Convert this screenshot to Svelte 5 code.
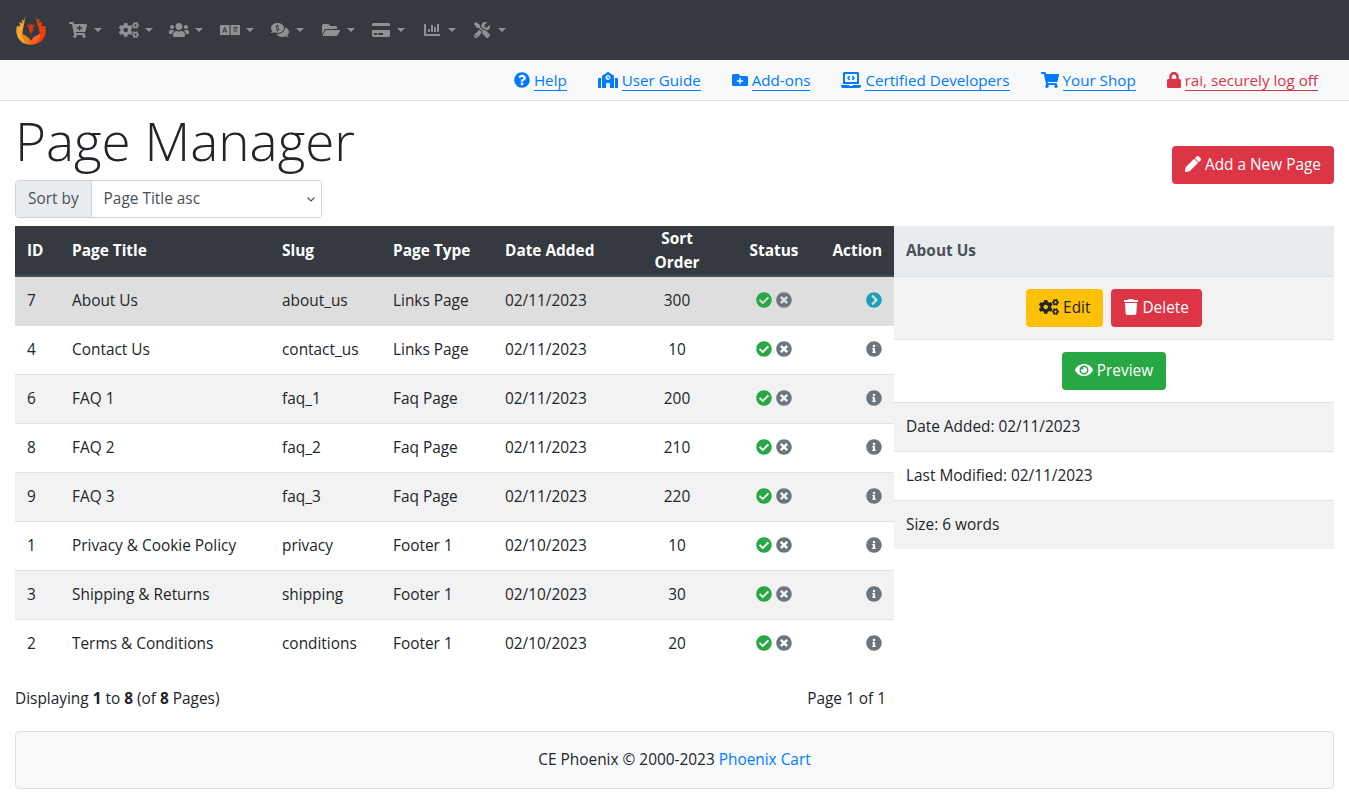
<script>
  const icons = {
    cartPlus: [576, 'M504.717 320H211.572l6.545 32h268.418c15.401 0 26.816 14.301 23.403 29.319l-5.517 24.276C523.112 414.668 536 433.828 536 456c0 31.202-25.519 56.444-56.824 55.994-29.823-.429-54.35-24.631-55.155-54.447-.44-16.287 6.085-31.049 16.803-41.548H231.176C241.553 426.165 248 440.326 248 456c0 31.813-26.528 57.431-58.67 55.938-28.54-1.325-51.751-24.385-53.251-52.917-1.158-22.034 10.436-41.455 28.051-51.586L93.883 64H24C10.745 64 0 53.255 0 40V24C0 10.745 10.745 0 24 0h102.529c11.401 0 21.228 8.021 23.513 19.19L159.208 64H551.99c15.401 0 26.816 14.301 23.403 29.319l-47.273 208C525.637 312.246 515.923 320 504.717 320zM408 168h-48v-40c0-8.837-7.163-16-16-16h-16c-8.837 0-16 7.163-16 16v40h-48c-8.837 0-16 7.163-16 16v16c0 8.837 7.163 16 16 16h48v40c0 8.837 7.163 16 16 16h16c8.837 0 16-7.163 16-16v-40h48c8.837 0 16-7.163 16-16v-16c0-8.837-7.163-16-16-16z'],
    cogs: [640, 'M512.1 191l-8.2 14.3c-3 5.3-9.4 7.5-15.1 5.4-11.8-4.4-22.6-10.7-32.1-18.6-4.6-3.8-5.8-10.5-2.8-15.7l8.2-14.3c-6.9-8-12.3-17.3-15.9-27.4h-16.5c-6 0-11.2-4.3-12.2-10.3-2-12-2.1-24.6 0-37.1 1-6 6.2-10.4 12.2-10.4h16.5c3.6-10.1 9-19.4 15.9-27.4l-8.2-14.3c-3-5.2-1.9-11.9 2.8-15.7 9.5-7.9 20.4-14.2 32.1-18.6 5.7-2.1 12.1.1 15.1 5.4l8.2 14.3c10.5-1.9 21.2-1.9 31.7 0L552 6.3c3-5.3 9.4-7.5 15.1-5.4 11.8 4.4 22.6 10.7 32.1 18.6 4.6 3.8 5.8 10.5 2.8 15.7l-8.2 14.3c6.9 8 12.3 17.3 15.9 27.4h16.5c6 0 11.2 4.3 12.2 10.3 2 12 2.1 24.6 0 37.1-1 6-6.2 10.4-12.2 10.4h-16.5c-3.6 10.1-9 19.4-15.9 27.4l8.2 14.3c3 5.2 1.9 11.9-2.8 15.7-9.5 7.9-20.4 14.2-32.1 18.6-5.7 2.1-12.1-.1-15.1-5.4l-8.2-14.3c-10.4 1.9-21.2 1.9-31.7 0zm-10.5-58.8c38.5 29.6 82.4-14.3 52.8-52.8-38.5-29.7-82.4 14.3-52.8 52.8zM386.3 286.1l33.7 16.8c10.1 5.8 14.5 18.1 10.5 29.1-8.9 24.2-26.4 46.4-42.6 65.8-7.4 8.9-20.2 11.1-30.3 5.3l-29.1-16.8c-16 13.7-34.6 24.6-54.9 31.7v33.6c0 11.6-8.3 21.6-19.7 23.6-24.6 4.2-50.4 4.4-75.9 0-11.5-2-20-11.9-20-23.6V418c-20.3-7.2-38.9-18-54.9-31.7L74 403c-10 5.8-22.9 3.6-30.3-5.3-16.2-19.4-33.3-41.6-42.2-65.7-4-10.9.4-23.2 10.5-29.1l33.3-16.8c-3.9-20.9-3.9-42.4 0-63.4L12 205.8c-10.1-5.8-14.6-18.1-10.5-29 8.9-24.2 26-46.4 42.2-65.8 7.4-8.9 20.2-11.1 30.3-5.3l29.1 16.8c16-13.7 34.6-24.6 54.9-31.7V57.1c0-11.5 8.2-21.5 19.6-23.5 24.6-4.2 50.5-4.4 76-.1 11.5 2 20 11.9 20 23.6v33.6c20.3 7.2 38.9 18 54.9 31.7l29.1-16.8c10-5.8 22.9-3.6 30.3 5.3 16.2 19.4 33.2 41.6 42.1 65.8 4 10.9.1 23.2-10 29.1l-33.7 16.8c3.9 21 3.9 42.5 0 63.5zm-117.6 21.1c59.2-77-28.7-164.9-105.7-105.7-59.2 77 28.7 164.9 105.7 105.7zm243.4 182.7l-8.2 14.3c-3 5.3-9.4 7.5-15.1 5.4-11.8-4.4-22.6-10.7-32.1-18.6-4.6-3.8-5.8-10.5-2.8-15.7l8.2-14.3c-6.9-8-12.3-17.3-15.9-27.4h-16.5c-6 0-11.2-4.3-12.2-10.3-2-12-2.1-24.6 0-37.1 1-6 6.2-10.4 12.2-10.4h16.5c3.6-10.1 9-19.4 15.9-27.4l-8.2-14.3c-3-5.2-1.9-11.9 2.8-15.7 9.5-7.9 20.4-14.2 32.1-18.6 5.7-2.1 12.1.1 15.1 5.4l8.2 14.3c10.5-1.9 21.2-1.9 31.7 0l8.2-14.3c3-5.3 9.4-7.5 15.1-5.4 11.8 4.4 22.6 10.7 32.1 18.6 4.6 3.8 5.8 10.5 2.8 15.7l-8.2 14.3c6.9 8 12.3 17.3 15.9 27.4h16.5c6 0 11.2 4.3 12.2 10.3 2 12 2.1 24.6 0 37.1-1 6-6.2 10.4-12.2 10.4h-16.5c-3.6 10.1-9 19.4-15.9 27.4l8.2 14.3c3 5.2 1.9 11.9-2.8 15.7-9.5 7.9-20.4 14.2-32.1 18.6-5.7 2.1-12.1-.1-15.1-5.4l-8.2-14.3c-10.4 1.9-21.2 1.9-31.7 0zM501.6 431c38.5 29.6 82.4-14.3 52.8-52.8-38.5-29.6-82.4 14.3-52.8 52.8z'],
    users: [640, 'M96 224c35.3 0 64-28.7 64-64s-28.7-64-64-64-64 28.7-64 64 28.7 64 64 64zm448 0c35.3 0 64-28.7 64-64s-28.7-64-64-64-64 28.7-64 64 28.7 64 64 64zm32 32h-64c-17.6 0-33.5 7.1-45.1 18.6 40.3 22.1 68.9 62 75.1 109.4h66c17.7 0 32-14.3 32-32v-32c0-35.3-28.7-64-64-64zm-256 0c61.9 0 112-50.1 112-112S381.9 32 320 32 208 82.1 208 144s50.1 112 112 112zm76.8 32h-8.3c-20.8 10-43.9 16-68.5 16s-47.6-6-68.5-16h-8.3C179.6 288 128 339.6 128 403.2V432c0 26.5 21.5 48 48 48h288c26.5 0 48-21.5 48-48v-28.8c0-63.6-51.6-115.2-115.2-115.2zm-223.7-13.4C161.5 263.1 145.6 256 128 256H64c-35.3 0-64 28.7-64 64v32c0 17.7 14.3 32 32 32h65.9c6.3-47.4 34.9-87.3 75.2-109.4z'],
    comments: [576, 'M416 192c0-88.37-93.12-160-208-160S0 103.63 0 192c0 34.27 14.13 65.95 37.97 91.98C24.61 314.22 2.52 338.16 2.2 338.48A7.995 7.995 0 0 0 8 352c36.58 0 66.93-12.25 88.73-24.98C128.93 342.76 167.02 352 208 352c114.88 0 208-71.63 208-160zm-224 96v-16.29c-11.29-.58-22.27-4.52-31.37-11.35-3.9-2.93-4.1-8.77-.57-12.14l11.75-11.21c2.77-2.64 6.89-2.76 10.13-.73 3.87 2.42 8.26 3.72 12.82 3.72h28.11c6.5 0 11.8-5.92 11.8-13.19 0-5.95-3.61-11.19-8.77-12.73l-45-13.5c-18.59-5.58-31.58-23.42-31.58-43.39 0-24.52 19.05-44.44 42.67-45.07V96c0-4.42 3.58-8 8-8h16c4.42 0 8 3.58 8 8v16.29c11.29.58 22.27 4.51 31.37 11.35 3.9 2.93 4.1 8.77.57 12.14l-11.75 11.21c-2.77 2.64-6.89 2.76-10.13.73-3.87-2.43-8.26-3.72-12.82-3.72h-28.11c-6.5 0-11.8 5.92-11.8 13.19 0 5.95 3.61 11.19 8.77 12.73l45 13.5c18.59 5.58 31.58 23.42 31.58 43.39 0 24.53-19.05 44.44-42.67 45.07V288c0 4.42-3.58 8-8 8h-16c-4.42 0-8-3.58-8-8zm346.01 123.99C561.87 385.96 576 354.27 576 320c0-66.94-53.49-124.2-129.33-148.07.86 6.6 1.33 13.29 1.33 20.07 0 105.87-107.66 192-240 192-10.78 0-21.32-.77-31.73-1.88C207.8 443.82 272.35 480 348 480c40.98 0 79.07-9.24 111.27-24.98 21.8 12.73 52.15 24.98 88.73 24.98 3.19 0 6.07-1.9 7.34-4.83 1.27-2.93.66-6.34-1.54-8.64-.32-.32-22.41-24.26-35.79-54.54z'],
    folderOpen: [576, 'M572.694 292.093L500.27 416.248A63.997 63.997 0 0 1 444.989 448H45.025c-18.523 0-30.064-20.093-20.731-36.093l72.424-124.155A64 64 0 0 1 152 256h399.964c18.523 0 30.064 20.093 20.73 36.093zM152 224h328v-48c0-26.51-21.49-48-48-48H272l-64-64H48C21.49 64 0 85.49 0 112v278.046l69.077-118.418C86.214 242.25 117.989 224 152 224z'],
    card: [576, 'M0 432c0 26.5 21.5 48 48 48h480c26.5 0 48-21.5 48-48V256H0v176zm192-68c0-6.6 5.4-12 12-12h136c6.6 0 12 5.4 12 12v40c0 6.6-5.4 12-12 12H204c-6.6 0-12-5.4-12-12v-40zm-128 0c0-6.6 5.4-12 12-12h72c6.6 0 12 5.4 12 12v40c0 6.6-5.4 12-12 12H76c-6.6 0-12-5.4-12-12v-40zM576 80v48H0V80c0-26.5 21.5-48 48-48h480c26.5 0 48 21.5 48 48z'],
    chart: [512, 'M332.8 320h38.4c6.4 0 12.8-6.4 12.8-12.8V172.8c0-6.4-6.4-12.8-12.8-12.8h-38.4c-6.4 0-12.8 6.4-12.8 12.8v134.4c0 6.4 6.4 12.8 12.8 12.8zm96 0h38.4c6.4 0 12.8-6.4 12.8-12.8V76.8c0-6.4-6.4-12.8-12.8-12.8h-38.4c-6.4 0-12.8 6.4-12.8 12.8v230.4c0 6.4 6.4 12.8 12.8 12.8zm-288 0h38.4c6.4 0 12.8-6.4 12.8-12.8v-70.4c0-6.4-6.4-12.8-12.8-12.8h-38.4c-6.4 0-12.8 6.4-12.8 12.8v70.4c0 6.4 6.4 12.8 12.8 12.8zm96 0h38.4c6.4 0 12.8-6.4 12.8-12.8V108.8c0-6.4-6.4-12.8-12.8-12.8h-38.4c-6.4 0-12.8 6.4-12.8 12.8v198.4c0 6.4 6.4 12.8 12.8 12.8zM496 384H64V80c0-8.84-7.16-16-16-16H16C7.16 64 0 71.16 0 80v336c0 17.67 14.33 32 32 32h464c8.84 0 16-7.16 16-16v-32c0-8.84-7.16-16-16-16z'],
    tools: [512, 'M501.1 395.7L384 278.6c-23.1-23.1-57.6-27.6-85.4-13.9L192 158.1V96L64 0 0 64l96 128h62.1l106.6 106.6c-13.6 27.8-9.2 62.3 13.9 85.4l117.1 117.1c14.6 14.6 38.2 14.6 52.7 0l52.7-52.7c14.5-14.6 14.5-38.2 0-52.7zM331.7 225c28.3 0 54.9 11 74.9 31l19.4 19.4c15.8-6.9 30.8-16.5 43.8-29.5 37.1-37.1 49.7-89.3 37.9-136.7-2.2-9-13.5-12.1-20.1-5.5l-74.4 74.4-67.9-11.3L334 98.9l74.4-74.4c6.6-6.6 3.4-17.9-5.7-20.2-47.4-11.7-99.6.9-136.6 37.9-28.5 28.5-41.9 66.1-41.2 103.6l82.1 82.1c8.1-1.9 16.5-2.9 24.7-2.9zm-103.9 82l-56.7-56.7L18.7 402.8c-25 25-25 65.5 0 90.5s65.5 25 90.5 0l123.6-123.6c-7.6-19.9-9.9-41.6-5-62.7zM64 472c-13.2 0-24-10.8-24-24 0-13.3 10.7-24 24-24s24 10.7 24 24c0 13.2-10.7 24-24 24z'],
    question: [512, 'M504 256c0 136.997-111.043 248-248 248S8 392.997 8 256C8 119.083 119.043 8 256 8s248 111.083 248 248zM262.655 90c-54.497 0-89.255 22.957-116.549 63.758-3.536 5.286-2.353 12.415 2.715 16.258l34.699 26.31c5.205 3.947 12.621 3.008 16.665-2.122 17.864-22.658 30.113-35.797 57.303-35.797 20.429 0 45.698 13.148 45.698 32.958 0 14.976-12.363 22.667-32.534 33.976C247.128 238.528 216 254.941 216 296v4c0 6.627 5.373 12 12 12h56c6.627 0 12-5.373 12-12v-1.333c0-28.462 83.186-29.647 83.186-106.667 0-58.002-60.165-102-116.531-102zM256 338c-25.365 0-46 20.635-46 46 0 25.364 20.635 46 46 46s46-20.636 46-46c0-25.365-20.635-46-46-46z'],
    school: [640, 'M0 224v272c0 8.84 7.16 16 16 16h80V192H32c-17.67 0-32 14.33-32 32zm360-48h-24v-40c0-4.42-3.58-8-8-8h-16c-4.42 0-8 3.58-8 8v64c0 4.42 3.58 8 8 8h48c4.42 0 8-3.58 8-8v-16c0-4.42-3.58-8-8-8zm137.75-63.96l-160-106.67a32.02 32.02 0 0 0-35.5 0l-160 106.67A32.002 32.002 0 0 0 128 138.66V512h128V368c0-8.84 7.16-16 16-16h96c8.84 0 16 7.16 16 16v144h128V138.67c0-10.7-5.35-20.7-14.25-26.63zM320 256c-44.18 0-80-35.82-80-80s35.82-80 80-80 80 35.82 80 80-35.82 80-80 80zm288-64h-64v320h80c8.84 0 16-7.16 16-16V224c0-17.67-14.33-32-32-32z'],
    folderPlus: [512, 'M464,128H272L208,64H48A48,48,0,0,0,0,112V400a48,48,0,0,0,48,48H464a48,48,0,0,0,48-48V176A48,48,0,0,0,464,128ZM359.5,296a16,16,0,0,1-16,16h-64v64a16,16,0,0,1-16,16h-16a16,16,0,0,1-16-16V312h-64a16,16,0,0,1-16-16V280a16,16,0,0,1,16-16h64V200a16,16,0,0,1,16-16h16a16,16,0,0,1,16,16v64h64a16,16,0,0,1,16,16Z'],
    laptop: [640, 'M255.03 261.65c6.25 6.25 16.38 6.25 22.63 0l11.31-11.31c6.25-6.25 6.25-16.38 0-22.63L253.25 192l35.71-35.72c6.25-6.25 6.25-16.38 0-22.63l-11.31-11.31c-6.25-6.25-16.38-6.25-22.63 0l-58.34 58.34c-6.25 6.25-6.25 16.38 0 22.63l58.35 58.34zm96.01-11.3l11.31 11.31c6.25 6.25 16.38 6.25 22.63 0l58.34-58.34c6.25-6.25 6.25-16.38 0-22.63l-58.34-58.34c-6.25-6.25-16.38-6.25-22.63 0l-11.31 11.31c-6.25 6.25-6.25 16.38 0 22.63L386.75 192l-35.71 35.72c-6.25 6.25-6.25 16.38 0 22.63zM624 416H381.54c-.74 19.81-14.71 32-32.74 32H288c-18.69 0-33.02-17.47-32.77-32H16c-8.8 0-16 7.2-16 16v16c0 35.2 28.8 64 64 64h512c35.2 0 64-28.8 64-64v-16c0-8.8-7.2-16-16-16zM576 48c0-26.4-21.6-48-48-48H112C85.6 0 64 21.6 64 48v336h512V48zm-64 272H128V64h384v256z'],
    cart: [576, 'M528.12 301.319l47.273-208C578.806 78.301 567.391 64 551.99 64H159.208l-9.166-44.81C147.758 8.021 137.93 0 126.529 0H24C10.745 0 0 10.745 0 24v16c0 13.255 10.745 24 24 24h69.883l70.248 343.435C147.325 417.1 136 435.222 136 456c0 30.928 25.072 56 56 56s56-25.072 56-56c0-15.674-6.447-29.835-16.824-40h209.647C430.447 426.165 424 440.326 424 456c0 30.928 25.072 56 56 56s56-25.072 56-56c0-22.172-12.888-41.332-31.579-50.405l5.517-24.276c3.413-15.018-8.002-29.319-23.403-29.319H218.117l-6.545-32h293.145c11.206 0 20.92-7.754 23.403-18.681z'],
    lock: [448, 'M400 224h-24v-72C376 68.2 307.8 0 224 0S72 68.2 72 152v72H48c-26.5 0-48 21.5-48 48v192c0 26.5 21.5 48 48 48h352c26.5 0 48-21.5 48-48V272c0-26.5-21.5-48-48-48zm-104 0H152v-72c0-39.7 32.3-72 72-72s72 32.3 72 72v72z'],
    pencil: [512, 'M497.9 142.1l-46.1 46.1c-4.7 4.7-12.3 4.7-17 0l-111-111c-4.7-4.7-4.7-12.3 0-17l46.1-46.1c18.7-18.7 49.1-18.7 67.9 0l60.1 60.1c18.8 18.7 18.8 49.1 0 67.9zM284.2 99.8L21.6 362.4.4 483.9c-2.9 16.4 11.4 30.6 27.8 27.8l121.5-21.3 262.6-262.6c4.7-4.7 4.7-12.3 0-17l-111-111c-4.8-4.7-12.4-4.7-17.1 0z'],
    trash: [448, 'M432 32H312l-9.4-18.7A24 24 0 0 0 281.1 0H166.8a23.72 23.72 0 0 0-21.4 13.3L136 32H16A16 16 0 0 0 0 48v32a16 16 0 0 0 16 16h416a16 16 0 0 0 16-16V48a16 16 0 0 0-16-16zM53.2 467a48 48 0 0 0 47.9 45h245.8a48 48 0 0 0 47.9-45L416 128H32z'],
    eye: [576, 'M572.52 241.4C518.29 135.59 410.93 64 288 64S57.68 135.64 3.48 241.41a32.35 32.35 0 0 0 0 29.19C57.71 376.41 165.07 448 288 448s230.32-71.64 284.52-177.41a32.35 32.35 0 0 0 0-29.19zM288 400a144 144 0 1 1 144-144 143.93 143.93 0 0 1-144 144zm0-240a95.31 95.31 0 0 0-25.31 3.79 47.85 47.85 0 0 1-66.9 66.9A95.78 95.78 0 1 0 288 160z'],
    check: [512, 'M504 256c0 136.967-111.033 248-248 248S8 392.967 8 256 119.033 8 256 8s248 111.033 248 248zM227.314 387.314l184-184c6.248-6.248 6.248-16.379 0-22.627l-22.627-22.627c-6.248-6.249-16.379-6.249-22.628 0L216 308.118l-70.059-70.059c-6.248-6.248-16.379-6.248-22.628 0l-22.627 22.627c-6.248 6.248-6.248 16.379 0 22.627l104 104c6.249 6.249 16.379 6.249 22.628.001z'],
    times: [512, 'M256 8C119 8 8 119 8 256s111 248 248 248 248-111 248-248S393 8 256 8zm121.6 313.1c4.7 4.7 4.7 12.3 0 17L338 377.6c-4.7 4.7-12.3 4.7-17 0L256 312l-65.1 65.6c-4.7 4.7-12.3 4.7-17 0L134.4 338c-4.7-4.7-4.7-12.3 0-17l65.6-65-65.6-65.1c-4.7-4.7-4.7-12.3 0-17l39.6-39.6c4.7-4.7 12.3-4.7 17 0l65 65.7 65.1-65.6c4.7-4.7 12.3-4.7 17 0l39.6 39.6c4.7 4.7 4.7 12.3 0 17L312 256l65.6 65.1z'],
    info: [512, 'M256 8C119.043 8 8 119.083 8 256c0 136.997 111.043 248 248 248s248-111.003 248-248C504 119.083 392.957 8 256 8zm0 110c23.196 0 42 18.804 42 42s-18.804 42-42 42-42-18.804-42-42 18.804-42 42-42zm56 254c0 6.627-5.373 12-12 12h-88c-6.627 0-12-5.373-12-12v-24c0-6.627 5.373-12 12-12h12v-64h-12c-6.627 0-12-5.373-12-12v-24c0-6.627 5.373-12 12-12h64c6.627 0 12 5.373 12 12v100h12c6.627 0 12 5.373 12 12v24z'],
    chevron: [512, 'M256 8c137 0 248 111 248 248S393 504 256 504 8 393 8 256 119 8 256 8zm113.9 231L234.4 103.5c-9.4-9.4-24.6-9.4-33.9 0l-17 17c-9.4 9.4-9.4 24.6 0 33.9L285.1 256 183.5 357.6c-9.4 9.4-9.4 24.6 0 33.9l17 17c9.4 9.4 24.6 9.4 33.9 0L369.9 273c9.4-9.4 9.4-24.6 0-34z']
  };

  const menu = ['cartPlus', 'cogs', 'users', 'language', 'comments', 'folderOpen', 'card', 'chart', 'tools'];

  const links = [
    { icon: 'question', label: 'Help' },
    { icon: 'school', label: 'User Guide' },
    { icon: 'folderPlus', label: 'Add-ons' },
    { icon: 'laptop', label: 'Certified Developers' },
    { icon: 'cart', label: 'Your Shop' },
    { icon: 'lock', label: 'rai, securely log off', danger: true }
  ];

  const pages = [
    { id: 7, title: 'About Us', slug: 'about_us', type: 'Links Page', date: '02/11/2023', sort: 300, active: true },
    { id: 4, title: 'Contact Us', slug: 'contact_us', type: 'Links Page', date: '02/11/2023', sort: 10 },
    { id: 6, title: 'FAQ 1', slug: 'faq_1', type: 'Faq Page', date: '02/11/2023', sort: 200 },
    { id: 8, title: 'FAQ 2', slug: 'faq_2', type: 'Faq Page', date: '02/11/2023', sort: 210 },
    { id: 9, title: 'FAQ 3', slug: 'faq_3', type: 'Faq Page', date: '02/11/2023', sort: 220 },
    { id: 1, title: 'Privacy & Cookie Policy', slug: 'privacy', type: 'Footer 1', date: '02/10/2023', sort: 10 },
    { id: 3, title: 'Shipping & Returns', slug: 'shipping', type: 'Footer 1', date: '02/10/2023', sort: 30 },
    { id: 2, title: 'Terms & Conditions', slug: 'conditions', type: 'Footer 1', date: '02/10/2023', sort: 20 }
  ];
</script>

{#snippet fa(name, cls = '')}
  <svg class="fa {cls}" viewBox="0 0 {icons[name][0]} 512" aria-hidden="true"><path d={icons[name][1]} /></svg>
{/snippet}

<nav class="topbar">
  <svg class="logo" viewBox="0 0 32 32" aria-label="Phoenix">
    <path fill="#f5a530" d="M10.5 1.5L9 7 7 5l.5 4.5L4.5 8 5 12.5 2 12C0 18 2 25 8 29l7 2C9 27 7 23 7.5 18c.5-5 2.5-10 3-16.500z" />
    <path fill="#ee3f0b" d="M20 1l2 5 2.500-1-.5 4 3-1-.5 4.500 3.500-.5c2 6 0 13-6 17l-7 2c6-4 8-8 7.500-13-.5-5-3.500-11-4.500-17z" />
    <path fill="#f97a12" d="M7.500 20c2.500 1 6.500 3 8.500 7 2-4 6-6 9-7 0 6-4 10.500-9 10.500S7.500 26 7.500 20z" />
    <path fill="#fb5f2a" d="M16 27c2-4 6-6 9-7 0 6-4 10.500-9 10.500z" />
    <path fill="#d8350e" d="M16 9.500l1.500 1.500 3-.5-2 2.500-.5 3-2 4.500-2-4.500-.5-3-2-2.500 3 .5z" />
  </svg>
  {#each menu as name}
    <a class="menu-item" href="#top">
      <span class="fw">
        {#if name === 'language'}
          <svg class="fa" viewBox="0 0 640 512" aria-hidden="true">
            <rect y="96" width="304" height="320" />
            <rect x="336" y="96" width="304" height="320" />
            <path class="cut" d="M90 340l62-170 62 170M112 290h80M420 180h140M490 150v30M545 180c-20 70-60 110-115 140M440 210c20 50 60 90 115 110" />
          </svg>
        {:else}
          {@render fa(name)}
        {/if}
      </span>
      <span class="caret"></span>
    </a>
  {/each}
</nav>

<div class="subbar">
  {#each links as link}
    <a class="sub-link" class:danger={link.danger} href="#top">
      {@render fa(link.icon)}
      <span class="label">{link.label}</span>
    </a>
  {/each}
</div>

<main class="page">
  <div class="head">
    <div>
      <h1>Page Manager</h1>
      <div class="sort">
        <span class="sort-label">Sort by</span>
        <select>
          <option>Page Title asc</option>
        </select>
      </div>
    </div>
    <a class="btn danger add" href="#top">{@render fa('pencil')} Add a New Page</a>
  </div>

  <div class="columns">
    <div class="list">
      <table>
        <thead>
          <tr>
            <th>ID</th>
            <th>Page Title</th>
            <th>Slug</th>
            <th>Page Type</th>
            <th>Date Added</th>
            <th class="center">Sort Order</th>
            <th class="center">Status</th>
            <th class="right">Action</th>
          </tr>
        </thead>
        <tbody>
          {#each pages as p}
            <tr class:active={p.active}>
              <td>{p.id}</td>
              <td>{p.title}</td>
              <td>{p.slug}</td>
              <td>{p.type}</td>
              <td>{p.date}</td>
              <td class="center">{p.sort}</td>
              <td class="center status">{@render fa('check', 'green')} {@render fa('times', 'grey')}</td>
              <td class="right">
                {#if p.active}
                  {@render fa('chevron', 'teal')}
                {:else}
                  {@render fa('info', 'grey')}
                {/if}
              </td>
            </tr>
          {/each}
        </tbody>
      </table>
      <div class="paging">
        <span>Displaying <b>1</b> to <b>8</b> (of <b>8</b> Pages)</span>
        <span>Page 1 of 1</span>
      </div>
    </div>

    <aside class="detail">
      <div class="detail-title">About Us</div>
      <div class="detail-row odd buttons">
        <a class="btn warning" href="#top">{@render fa('cogs')} Edit</a>
        <a class="btn danger" href="#top">{@render fa('trash')} Delete</a>
      </div>
      <div class="detail-row buttons">
        <a class="btn success" href="#top">{@render fa('eye')} Preview</a>
      </div>
      <div class="detail-row odd">Date Added: 02/11/2023</div>
      <div class="detail-row">Last Modified: 02/11/2023</div>
      <div class="detail-row odd">Size: 6 words</div>
    </aside>
  </div>

  <footer>CE Phoenix © 2000-2023 <a href="#top">Phoenix Cart</a></footer>
</main>

<style>
  :global(body) {
    font-family: "Open Sans", "Noto Sans", sans-serif;
    font-size: 15.4px;
    line-height: 24px;
    color: #212529;
    background: #fff;
  }

  .fa {
    height: 16px;
    width: auto;
    fill: currentColor;
    vertical-align: -2px;
  }

  .topbar {
    display: flex;
    align-items: center;
    height: 60px;
    padding-left: 15px;
    background: #343a40;
  }
  .logo {
    width: 32px;
    height: 32px;
    margin-right: 13px;
  }
  .menu-item {
    display: flex;
    align-items: center;
    box-sizing: border-box;
    width: 50.5px;
    flex: none;
    padding-left: 8px;
    color: #8f9295;
    text-decoration: none;
  }
  .fw {
    display: flex;
    justify-content: center;
    width: 20px;
  }
  .cut {
    fill: none;
    stroke: #343a40;
    stroke-width: 30;
  }
  .caret {
    margin-left: 6px;
    border-top: 4.8px solid currentColor;
    border-left: 4.8px solid transparent;
    border-right: 4.8px solid transparent;
  }

  .subbar {
    display: flex;
    justify-content: flex-end;
    gap: 31px;
    height: 40px;
    padding-right: 31px;
    align-items: center;
    background: #f8f9fa;
    border-bottom: 1px solid #dee2e6;
    font-size: 15.2px;
  }
  .sub-link {
    color: #007bff;
    text-decoration: none;
  }
  .sub-link.danger {
    color: #dc3545;
  }
  .label {
    border-bottom: 1px solid currentColor;
  }

  .page {
    padding: 0 15px;
  }
  .head {
    display: flex;
    justify-content: space-between;
  }
  h1 {
    margin: 0;
    font-size: 53px;
    font-weight: 300;
    line-height: 79px;
  }
  .sort {
    display: flex;
    width: 307px;
    height: 38px;
    border: 1px solid #ced4da;
    border-radius: 4px;
    box-sizing: border-box;
    color: #495057;
    overflow: hidden;
  }
  .sort-label {
    display: flex;
    align-items: center;
    padding: 0 12px;
    background: #e9ecef;
    border-right: 1px solid #ced4da;
  }
  select {
    flex: 1;
    padding: 0 12px;
    border: 0;
    appearance: none;
    background: #fff url("data:image/svg+xml,%3Csvg xmlns='http://www.w3.org/2000/svg' viewBox='0 0 8 5'%3E%3Cpath d='M.5.5L4 4 7.500.5' fill='none' stroke='%23495057' stroke-width='1.100'/%3E%3C/svg%3E") no-repeat right 6px center / 8px 5px;
    color: #495057;
    font: inherit;
  }

  .btn {
    display: inline-block;
    padding: 7px 13px;
    border-radius: 4px;
    color: #fff;
    text-decoration: none;
    white-space: nowrap;
  }
  .btn.danger {
    background: #dc3545;
  }
  .btn.warning {
    background: #ffc107;
    color: #212529;
  }
  .btn.success {
    background: #28a745;
  }
  .add {
    align-self: flex-start;
    margin-top: 45px;
  }

  .columns {
    display: flex;
    margin-top: 8px;
  }
  .list {
    flex: 0 0 879px;
  }
  .detail {
    flex: 1;
  }

  table {
    width: 879px;
    table-layout: fixed;
    border-collapse: collapse;
  }
  th {
    height: 50px;
    padding: 0 12px;
    box-sizing: border-box;
    background: #343a40;
    border-bottom: 2px solid #454d55;
    color: #fff;
    font-weight: 700;
    text-align: left;
  }
  th:nth-child(1) { width: 45px; }
  th:nth-child(2) { width: 210px; }
  th:nth-child(3) { width: 111px; }
  th:nth-child(4) { width: 112px; }
  th:nth-child(5) { width: 132px; }
  th:nth-child(6) { width: 104px; }
  th:nth-child(7) { width: 90px; }
  td {
    height: 49px;
    padding: 0 12px;
    box-sizing: border-box;
    border-top: 1px solid #dee2e6;
  }
  tbody tr:first-child td {
    border-top: 0;
  }
  tbody tr:nth-child(even) {
    background: #fff;
  }
  tbody tr:nth-child(odd) {
    background: #f2f2f2;
  }
  tbody tr.active {
    background: #dedede;
  }
  .center {
    text-align: center;
  }
  .right {
    text-align: right;
  }
  .green { color: #28a745; }
  .grey { color: #6c757d; }
  .teal { color: #17a2b8; }

  .paging {
    display: flex;
    justify-content: space-between;
    padding-right: 8px;
    margin-top: 19px;
  }

  .detail-title {
    height: 50px;
    padding: 0 12px;
    display: flex;
    align-items: center;
    box-sizing: border-box;
    background: #e9ecef;
    color: #495057;
    font-weight: 700;
  }
  .detail-row {
    padding: 12px;
    border-top: 1px solid #dee2e6;
  }
  .odd {
    background: #f2f2f2;
  }
  .buttons {
    display: flex;
    justify-content: center;
    gap: 8px;
  }

  footer {
    margin-top: 20px;
    padding: 16px;
    border: 1px solid #dfdfdf;
    border-radius: 4px;
    background: #f8f9fa;
    text-align: center;
  }
  footer a {
    color: #007bff;
    text-decoration: none;
  }
</style>
